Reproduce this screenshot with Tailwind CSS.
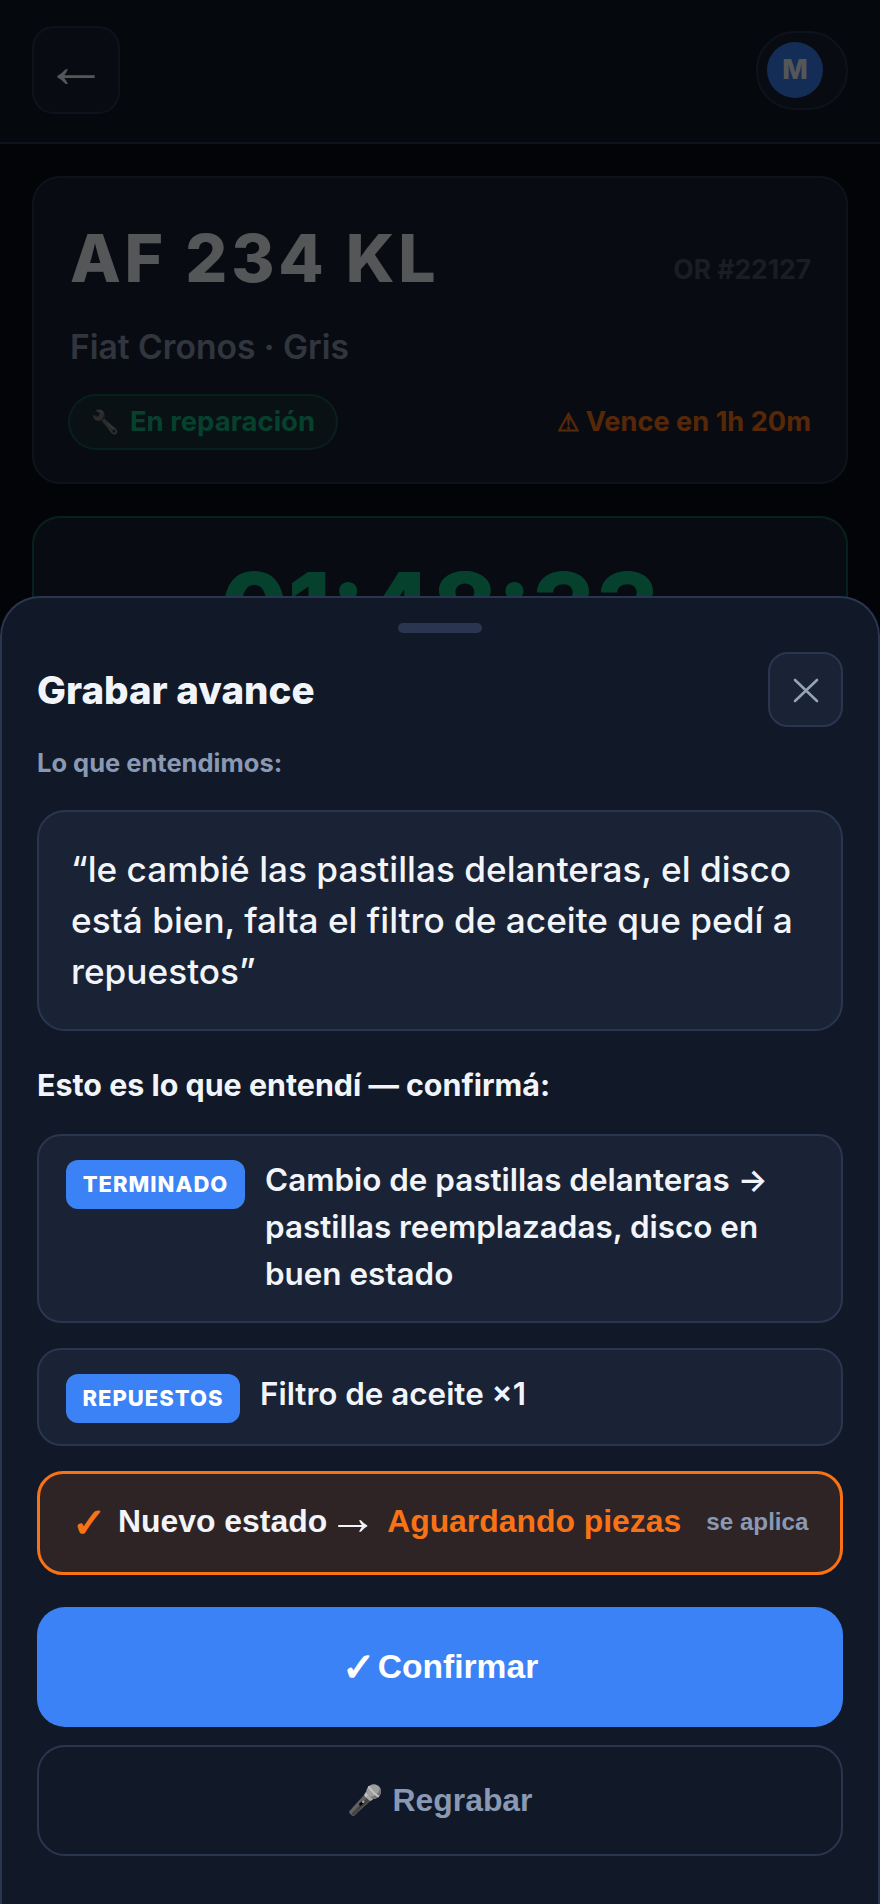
<!DOCTYPE html>
<html lang="es"><head><meta charset="utf-8"><script src="https://cdn.jsdelivr.net/npm/@tailwindcss/browser@4"></script></head>
<body class="m-0 bg-[#0a0d14]">
<div class="relative w-[880px] h-[1904px] overflow-hidden bg-[#0a0d14] font-['Inter',sans-serif] text-[#f1f5f9]">
  <header class="h-[144px] bg-[#111827] border-b-2 border-[#2a3650] pl-[32px] pr-[32px] flex items-center justify-between">
    <button class="w-[88px] h-[88px] mt-[-2px] rounded-[22px] bg-[#1a2235] border-2 border-[#2a3650] flex items-center justify-center text-[63px] leading-none font-['Liberation_Sans',sans-serif] font-bold"><span class="mt-[-10px]">←</span></button>
    <div class="w-[92px] h-[79px] mt-[-2px] rounded-[39px] bg-[#1a2235] border-2 border-[#2a3650] pl-[9px] flex items-center">
      <div class="w-[56px] h-[56px] rounded-full bg-[#3b82f6] flex items-center justify-center text-[27px] font-extrabold">M</div>
    </div>
  </header>
  <main class="px-[32px] pt-[32px] flex flex-col gap-[32px]">
    <section class="h-[308px] rounded-[28px] bg-[#1a2235] border-2 border-[#2a3650] pl-[36px] pr-[35px] pt-[41px]">
      <div class="flex items-end justify-between">
        <div class="text-[66px] leading-[78px] font-extrabold tracking-[3.8px]">AF 234 KL</div>
        <div class="text-[26.4px] leading-[32px] font-bold text-[#4b5563] mb-[12px]">OR #22127</div>
      </div>
      <div class="mt-[29px] text-[33.6px] leading-[41px] font-semibold text-[#8a99b3]">Fiat Cronos · Gris</div>
      <div class="mt-[27px] flex items-center justify-between">
        <div class="h-[56px] w-[270px] ml-[-2px] rounded-full bg-[#22c55e]/10 border-2 border-[#10b981]/30 flex items-center justify-center gap-[10px] text-[27.5px] font-bold text-[#10b981]"><span class="grayscale brightness-75 text-[23px]">🔧</span><span>En reparación</span></div>
        <div class="text-[27.2px] font-bold text-[#f97316]"><span class="font-['Liberation_Sans',sans-serif] text-[25px]">⚠</span> Vence en 1h 20m</div>
      </div>
    </section>
    <section class="h-[400px] rounded-[28px] bg-[#1a2235] border-2 border-[#10b981]/40 pt-[32px] text-center text-[97.5px] leading-[116px] font-extrabold text-[#10b981]">01:48:33</section>
  </main>
  <div class="absolute inset-0 bg-black/65"></div>
  <div class="absolute left-0 right-0 bottom-0 h-[1308px] rounded-t-[40px] bg-[#111827] border-2 border-b-0 border-[#2a3650] pl-[35px] pr-[35px] pt-[25px]">
    <div class="w-[84px] h-[10px] mx-auto rounded-full bg-[#2a3650]"></div>
    <div class="mt-[19px] flex items-center justify-between">
      <h2 class="text-[38.5px] font-extrabold leading-[44px]">Grabar avance</h2>
      <button class="w-[75px] h-[75px] rounded-[20px] bg-[#1a2235] border-2 border-[#2a3650] flex items-center justify-center text-[#94a3b8]">
        <svg width="26" height="26" viewBox="0 0 26 26" fill="none" stroke="currentColor" stroke-width="2.6" stroke-linecap="round"><path d="M2 3L24 24M24 3L2 24"/></svg>
      </button>
    </div>
    <div class="mt-[21px] text-[25.5px] leading-[30px] font-bold text-[#8a99b3]">Lo que entendimos:</div>
    <div class="mt-[32px] h-[221px] rounded-[28px] bg-[#1a2235] border-2 border-[#2a3650] pl-[32px] pr-[30px] pt-[32px] text-[35.2px] leading-[51px] font-medium">“le cambié las pastillas delanteras, el disco está bien, falta el filtro de aceite que pedí a repuestos”</div>
    <div class="mt-[36px] text-[30.4px] leading-[36px] font-bold">Esto es lo que entendí — confirmá:</div>
    <div class="mt-[31px] h-[189px] rounded-[24px] bg-[#1a2235] border-2 border-[#2a3650] pl-[27px] pr-[20px] pt-[24px] flex items-start gap-[20px]">
      <span class="w-[179px] h-[49px] shrink-0 rounded-[12px] bg-[#3b82f6] text-white text-[22px] font-extrabold tracking-[1px] flex items-center justify-center">TERMINADO</span>
      <p class="mt-[-3px] text-[31.4px] leading-[47px] font-semibold">Cambio de pastillas delanteras → pastillas reemplazadas, disco en buen estado</p>
    </div>
    <div class="mt-[25px] h-[98px] rounded-[24px] bg-[#1a2235] border-2 border-[#2a3650] pl-[27px] pr-[20px] pt-[24px] flex items-start gap-[20px]">
      <span class="w-[174px] h-[49px] shrink-0 rounded-[12px] bg-[#3b82f6] text-white text-[22px] font-extrabold tracking-[1px] flex items-center justify-center">REPUESTOS</span>
      <p class="mt-[-3px] text-[31.4px] leading-[47px] font-semibold">Filtro de aceite ×1</p>
    </div>
    <div class="mt-[25px] h-[104px] rounded-[26px] bg-[#2e2426] border-[3px] border-[#f97316] pl-[32px] flex items-center font-['Liberation_Sans',sans-serif] font-bold">
      <span class="text-[41px] leading-none text-[#f97316]">✓</span>
      <span class="ml-[12px] text-[31.9px] mt-[-2px]">Nuevo estado</span>
      <span class="ml-[1px] text-[49px] leading-none font-normal mt-[-11px]">→</span>
      <span class="ml-[10px] text-[31.9px] text-[#f97316] mt-[-2px]">Aguardando piezas</span>
      <span class="ml-[25px] text-[24.2px] text-[#8a99b3] mt-[-2px]">se aplica</span>
    </div>
    <button class="mt-[32px] w-full h-[120px] rounded-[28px] bg-[#3b82f6] text-white text-[33.6px] font-bold font-['Liberation_Sans',sans-serif] flex items-center justify-center gap-[2px]"><span class="text-[40px] leading-none">✓</span><span>Confirmar</span></button>
    <button class="mt-[18px] w-full h-[111px] rounded-[28px] border-2 border-[#2a3650] text-[#8a99b3] text-[31.9px] font-bold font-['Liberation_Sans',sans-serif] flex items-center justify-center gap-[9px]"><span class="grayscale text-[29px] leading-none">🎤</span><span>Regrabar</span></button>
  </div>
</div>
</body></html>
